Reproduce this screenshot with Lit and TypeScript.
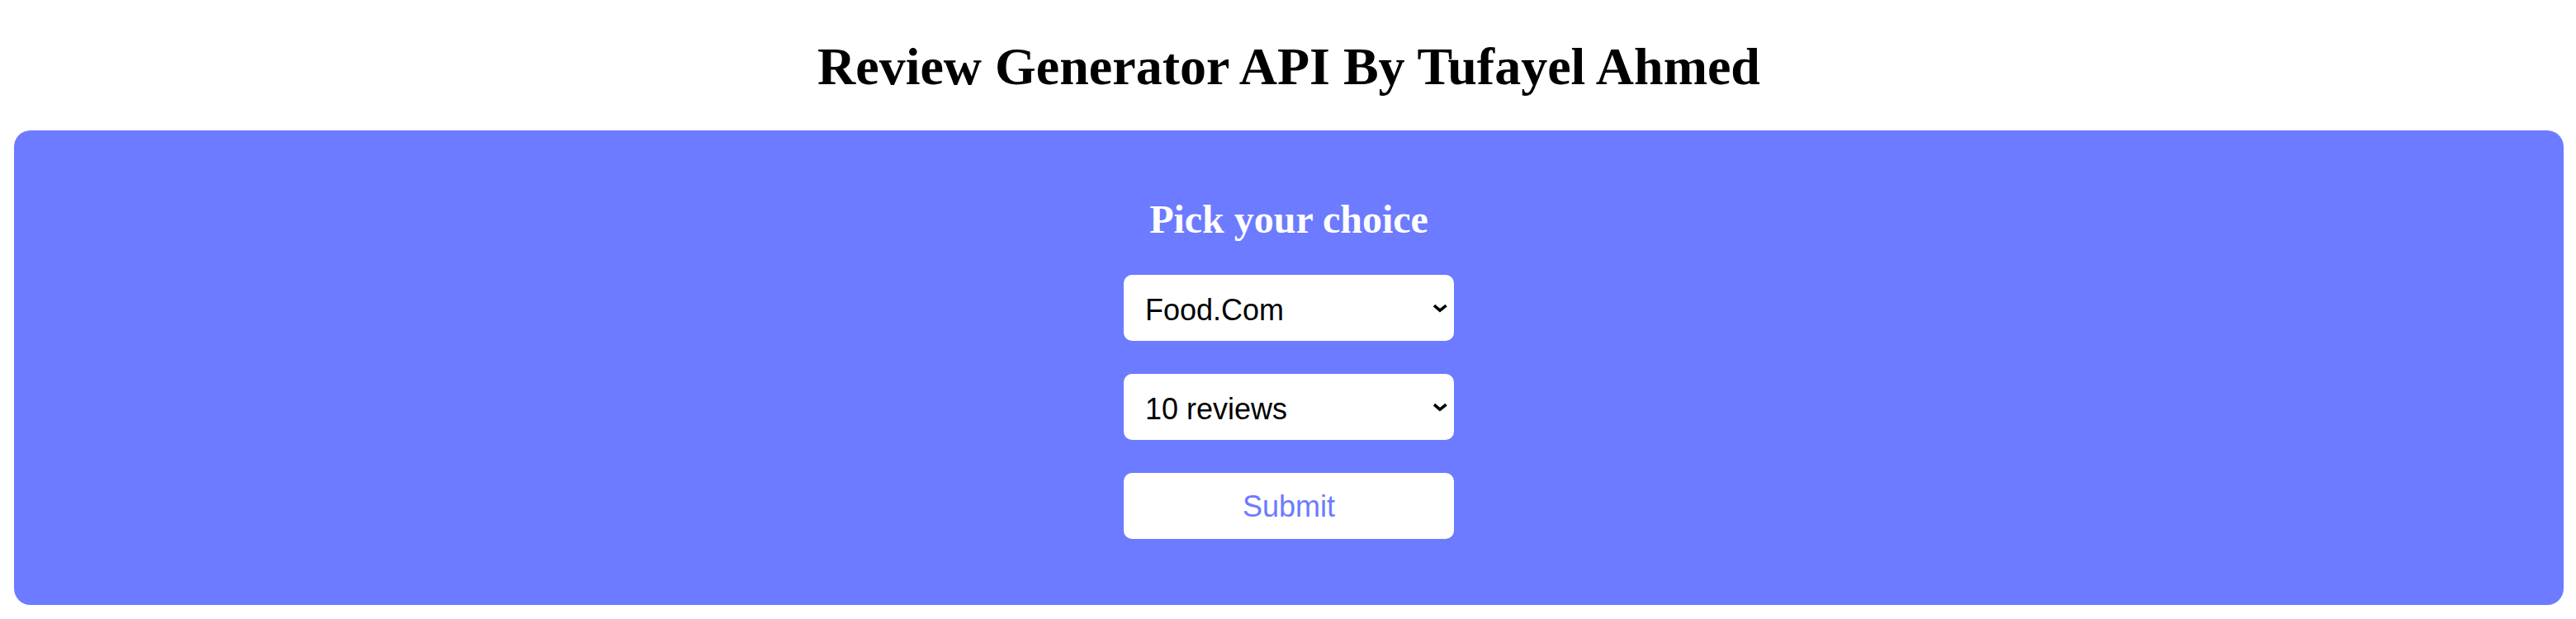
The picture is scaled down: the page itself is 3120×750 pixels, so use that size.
import { LitElement, html, css } from "lit";
import { customElement, state } from "lit/decorators.js";

@customElement("app-root")
export class AppRoot extends LitElement {
  static styles = css`
    :host {
      display: block;
      padding: 16px 15px 16px 17px;
      font-family: "Liberation Serif", "Times New Roman", serif;
      color: #000;
    }
    .title {
      margin: 28px 0 41px;
      font-size: 64px;
      line-height: 73px;
      text-align: center;
    }
    .panel {
      display: flex;
      flex-direction: column;
      align-items: center;
      gap: 40px;
      padding: 80px;
      border-radius: 20px;
      background: #6c7bff;
    }
    .heading {
      margin: 0;
      font-size: 48px;
      line-height: 55px;
      color: #fff;
    }
    .field {
      position: relative;
      display: block;
    }
    .control {
      box-sizing: border-box;
      display: block;
      width: 400px;
      height: 80px;
      padding: 4px 26px 0;
      border: 0;
      border-radius: 10px;
      background: #fff;
      color: #000;
      font-family: "Liberation Sans", Arial, sans-serif;
      font-size: 36px;
      appearance: none;
    }
    .submit {
      padding-top: 2px;
      color: #6c7bff;
      text-align: center;
    }
    .chevron {
      position: absolute;
      top: 30px;
      right: 7px;
      width: 20px;
      height: 20px;
      pointer-events: none;
    }
  `;

  @state() private site = "Food.Com";
  @state() private count = "10 reviews";

  private picker(label: string, value: string, options: string[], pick: (v: string) => void) {
    return html`
      <label class="field">
        <select
          class="control"
          aria-label=${label}
          @change=${(e: Event) => pick((e.target as HTMLSelectElement).value)}
        >
          ${options.map((o) => html`<option ?selected=${o === value}>${o}</option>`)}
        </select>
        <svg class="chevron" viewBox="0 0 20 20" aria-hidden="true">
          <path d="M3 7.2 L10 13.2 L17.6 7.2" fill="none" stroke="#000" stroke-width="3.6" />
        </svg>
      </label>
    `;
  }

  render() {
    return html`
      <h1 class="title">Review Generator API By Tufayel Ahmed</h1>
      <form class="panel" @submit=${(e: Event) => e.preventDefault()}>
        <h2 class="heading">Pick your choice</h2>
        ${this.picker("Site", this.site, ["Food.Com"], (v) => (this.site = v))}
        ${this.picker("Number of reviews", this.count, ["10 reviews"], (v) => (this.count = v))}
        <button class="control submit" type="submit">Submit</button>
      </form>
    `;
  }
}
